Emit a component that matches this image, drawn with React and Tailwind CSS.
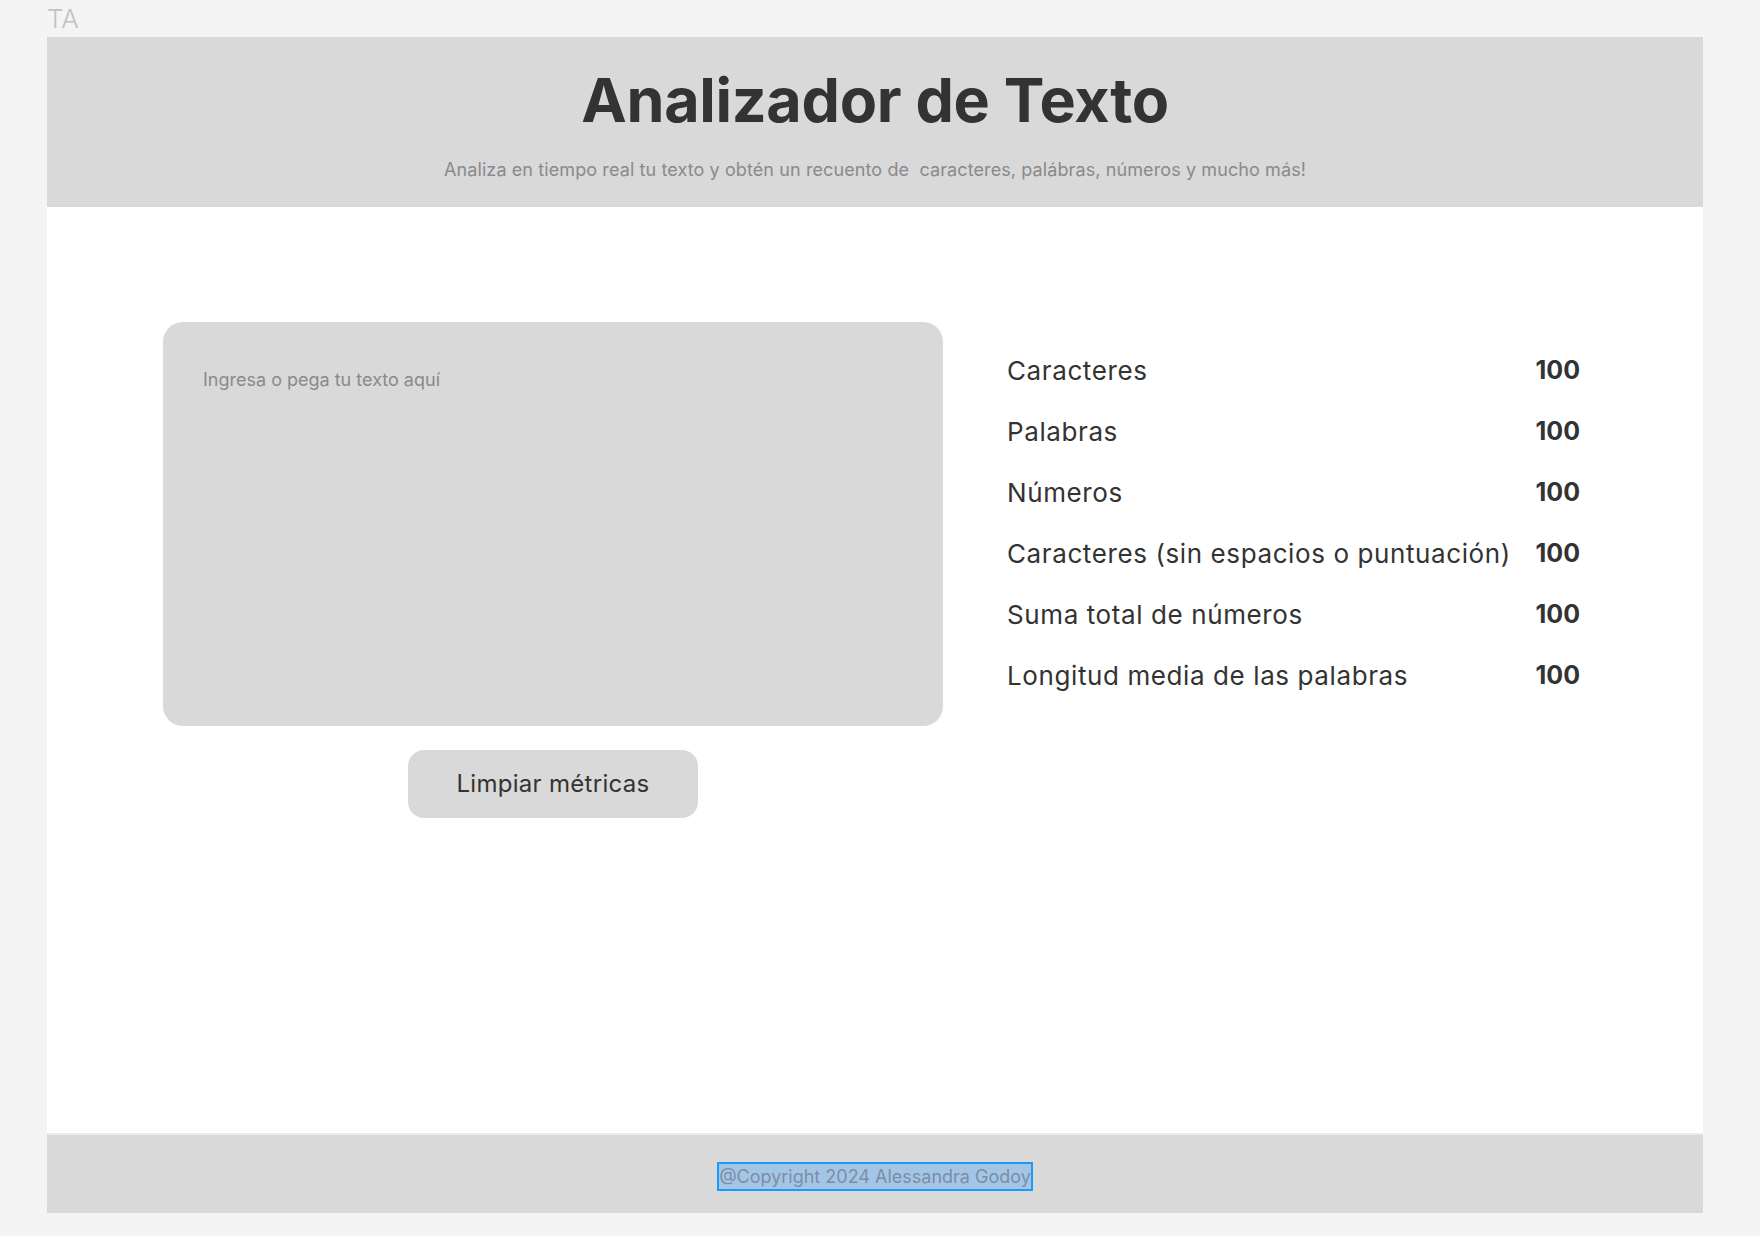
const stats = [
  ['Caracteres', 100],
  ['Palabras', 100],
  ['Números', 100],
  ['Caracteres (sin espacios o puntuación)', 100],
  ['Suma total de números', 100],
  ['Longitud media de las palabras', 100],
]

export default function App() {
  return (
    <div className="min-h-screen bg-[#f4f4f4] font-['Inter','Noto_Sans',sans-serif]">
      {/* etiqueta del frame */}
      <div className="h-[37px] pl-[47px] flex items-center text-[26px] leading-none font-light text-[#c2c2c2]">
        TA
      </div>

      <div className="ml-[47px] w-[1656px] h-[1176px] bg-white flex flex-col">
        {/* ── Header ── */}
        <header className="h-[170px] bg-[#d9d9d9] flex flex-col items-center pt-[28px]">
          <h1 className="text-[61px] leading-[70px] font-bold tracking-[-0.3px] text-[#333333]">
            Analizador de Texto
          </h1>
          <p className="mt-[22px] text-[18px] leading-[26px] tracking-[0.1px] text-[#8a8a8a] whitespace-pre">
            Analiza en tiempo real tu texto y obtén un recuento de  caracteres, palábras, números y mucho más!
          </p>
        </header>

        {/* ── Contenido ── */}
        <main className="flex-1 flex pt-[115px] pl-[116px] gap-[64px]">
          <div className="flex flex-col items-center w-[780px]">
            <textarea
              placeholder="Ingresa o pega tu texto aquí"
              className="w-[780px] h-[404px] bg-[#d9d9d9] rounded-[20px] px-[40px] py-[44px] resize-none outline-none text-[18px] text-[#333] placeholder-[#8a8a8a]"
            />
            <button className="mt-[24px] w-[290px] h-[68px] rounded-[16px] bg-[#d9d9d9] text-[24px] tracking-[0.3px] text-[#333333]">
              Limpiar métricas
            </button>
          </div>

          <div className="w-[573px] pt-[18px] flex flex-col">
            {stats.map(([label, value]) => (
              <div key={label} className="h-[61px] flex items-center justify-between text-[26px] text-[#333333]">
                <span className="tracking-[0.6px]">{label}</span>
                <span className="font-bold text-[25px]">{value}</span>
              </div>
            ))}
          </div>
        </main>

        {/* ── Footer ── */}
        <footer className="h-[80px] bg-[#d9d9d9] border-t-2 border-[#ebebeb] flex items-center justify-center pt-[4px]">
          <span className="h-[29px] flex items-center border-2 border-[#1a9bfc] bg-[#a4c6e6] text-[18px] text-[#7b8ea5]">
            @Copyright 2024 Alessandra Godoy
          </span>
        </footer>
      </div>
    </div>
  )
}
